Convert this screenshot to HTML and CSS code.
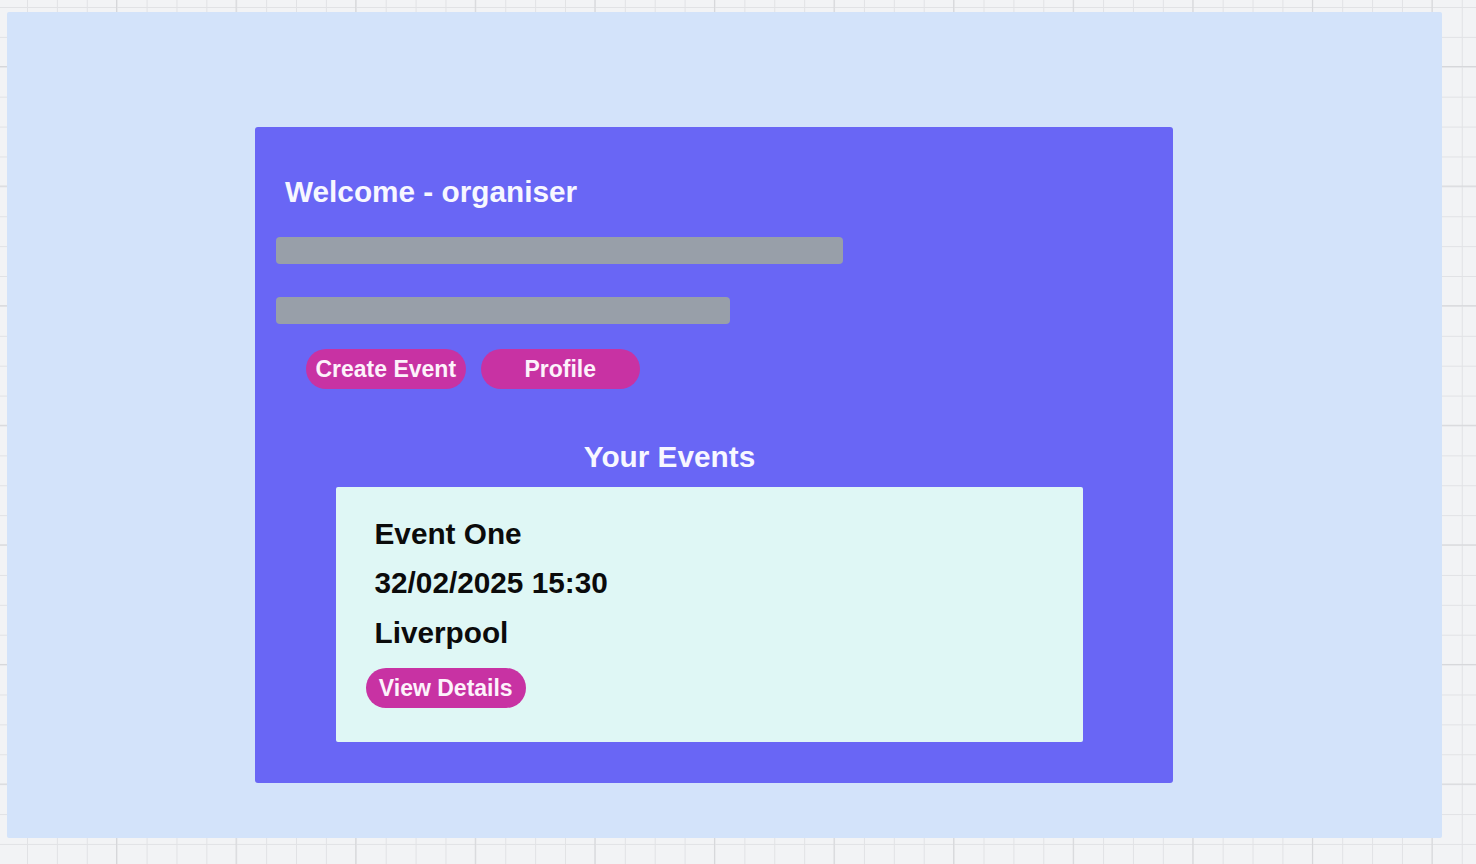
FILE: index.html
```html
<!DOCTYPE html>
<html lang="en">
<head>
<meta charset="utf-8">
<title>Organiser Dashboard</title>
<link rel="stylesheet" href="styles.css">
</head>
<body>
<div class="canvas">
  <div class="frame">
    <main class="dashboard">
      <h1 class="welcome">Welcome - organiser</h1>
      <div class="bar bar-long"></div>
      <div class="bar bar-short"></div>
      <div class="actions">
        <button class="pill">Create Event</button>
        <button class="pill">Profile</button>
      </div>
      <h2 class="section-title">Your Events</h2>
      <section class="event-card">
        <p class="event-line">Event One</p>
        <p class="event-line">32/02/2025 15:30</p>
        <p class="event-line">Liverpool</p>
        <button class="pill">View Details</button>
      </section>
    </main>
  </div>
</div>
</body>
</html>
```

FILE: styles.css
```css
html, body {
  margin: 0;
  padding: 0;
  height: 100%;
}

body {
  overflow: hidden;
  font-family: "Liberation Sans", Arial, sans-serif;
  background-color: #f2f3f5;
  background-image:
    linear-gradient(to right, #d6d7da 1px, transparent 1px),
    linear-gradient(to bottom, #d6d7da 1px, transparent 1px),
    linear-gradient(to right, #e1e2e5 1px, transparent 1px),
    linear-gradient(to bottom, #e1e2e5 1px, transparent 1px);
  background-size: 119.6px 119.6px, 119.6px 119.6px, 29.9px 29.9px, 29.9px 29.9px;
  background-position: 116px 0, 0 66px, 27px 0, 0 7px;
}

.canvas {
  padding: 12px 0 0 7px;
}

.frame {
  width: 1435px;
  height: 826px;
  background: #d3e3fa;
  border-radius: 2px;
  padding: 115px 0 0 248px;
  box-sizing: border-box;
}

.dashboard {
  width: 918px;
  height: 656px;
  box-sizing: border-box;
  background: #6966f5;
  border-radius: 3px;
  padding: 48px 21px 0 21px;
  display: flex;
  flex-direction: column;
  align-items: flex-start;
}

.welcome {
  margin: 0 0 28px 9px;
  font-size: 29.75px;
  line-height: 34px;
  font-weight: 700;
  color: #f7f7ff;
}

.bar {
  height: 26.5px;
  background: #989fa9;
  border-radius: 4px;
}

.bar-long {
  width: 567px;
}

.bar-short {
  width: 454px;
  margin-top: 33.5px;
}

.actions {
  display: flex;
  gap: 15px;
  margin: 25px 0 0 30px;
}

.pill {
  width: 159.5px;
  height: 40px;
  border: none;
  border-radius: 20px;
  background: #c832a3;
  color: #fdf2fb;
  font-family: "Liberation Sans", Arial, sans-serif;
  font-size: 23px;
  font-weight: 700;
  padding: 0;
  text-align: center;
  line-height: 40px;
}

.section-title {
  align-self: stretch;
  width: 787px;
  margin: 51px 0 0 0;
  text-align: center;
  font-size: 29.75px;
  line-height: 34px;
  font-weight: 700;
  color: #f7f7ff;
}

.event-card {
  width: 747.5px;
  height: 255px;
  box-sizing: border-box;
  margin: 13px 0 0 59.5px;
  background: #dff7f5;
  border-radius: 2px;
  padding: 22px 0 0 39px;
  display: flex;
  flex-direction: column;
  align-items: flex-start;
}

.event-line {
  margin: 0;
  font-size: 29.75px;
  line-height: 49.5px;
  font-weight: 700;
  color: #0b0b0b;
}

.event-card .pill {
  margin: 10.5px 0 0 -8.5px;
}
```
